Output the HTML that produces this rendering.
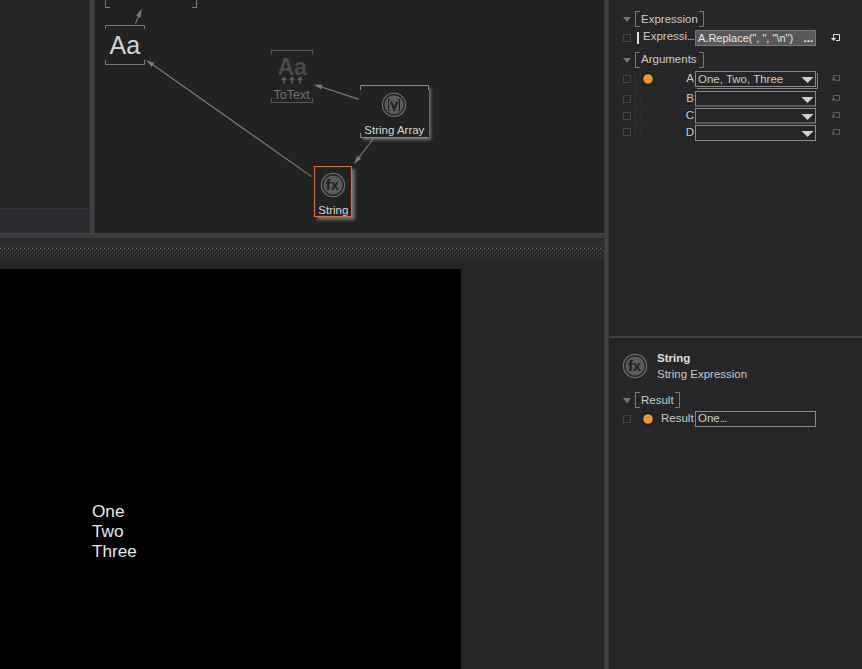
<!DOCTYPE html>
<html><head><meta charset="utf-8">
<style>
html,body{margin:0;padding:0;}
body{width:862px;height:669px;overflow:hidden;position:relative;background:#262628;font-family:"Liberation Sans",sans-serif;}
.a{position:absolute;}
.t{position:absolute;white-space:pre;font-size:11.5px;line-height:13px;color:#cbcbcb;}
svg{position:absolute;left:0;top:0;}
</style></head><body>
<!-- left panel -->
<div class="a" style="left:0;top:0;width:89px;height:208px;background:#232323"></div>
<div class="a" style="left:0;top:208px;width:89px;height:25px;background:#2b2b2f;box-sizing:border-box;border-top:1px solid #36363a"></div>
<div class="a" style="left:89px;top:0;width:6px;height:233px;background:linear-gradient(90deg,#333336,#424245 45%,#3c3c3f 80%,#303032)"></div>
<!-- node editor -->
<div class="a" style="left:95px;top:0;width:509px;height:233px;background:#222222"></div>
<div class="a" style="left:601px;top:0;width:3px;height:233px;background:#202020"></div>
<!-- horizontal bar -->
<div class="a" style="left:0;top:233px;width:604px;height:5px;background:#3b3b3e;box-sizing:border-box;border-top:1px solid #444447"></div>
<!-- dotted band -->
<div class="a" style="left:0;top:238px;width:604px;height:18px;background:#2a2a2c"></div>
<svg style="left:0;top:238px" width="604" height="18">
<defs><pattern id="dp" x="0" y="0" width="4" height="18" patternUnits="userSpaceOnUse">
<rect x="0" y="2" width="1" height="1" fill="#343436"/><rect x="2" y="4" width="1" height="1" fill="#3c3c3e"/><rect x="0" y="6" width="1" height="1" fill="#48484a"/><rect x="2" y="8" width="1" height="1" fill="#5a5a5c"/><rect x="0" y="10" width="1" height="1" fill="#747476"/><rect x="2" y="12" width="1" height="1" fill="#5a5a5c"/><rect x="0" y="14" width="1" height="1" fill="#48484a"/><rect x="2" y="16" width="1" height="1" fill="#38383a"/>
</pattern></defs>
<filter id="sb" x="0" y="0" width="100%" height="100%"><feGaussianBlur stdDeviation="0.45"/></filter><g filter="url(#sb)"><rect x="0" y="0" width="604" height="18" fill="#2a2a2c"/><rect x="0" y="0" width="604" height="18" fill="url(#dp)"/></g>
</svg>
<!-- viewer -->
<div class="a" style="left:0;top:256px;width:604px;height:413px;background:#262628"></div>
<div class="a" style="left:0;top:256px;width:604px;height:3px;background:#2b2b2d"></div>
<div class="a" style="left:0;top:269px;width:461px;height:400px;background:#000"></div>
<div class="a" style="left:92px;top:501px;font-size:17.2px;line-height:20px;color:#e8e8e8;white-space:pre">One
Two
Three</div>
<!-- right divider -->
<div class="a" style="left:604px;top:0;width:5px;height:669px;background:linear-gradient(90deg,#38383b,#454548 50%,#3a3a3d 85%,#303033)"></div>
<!-- right panel -->
<div class="a" style="left:609px;top:0;width:253px;height:669px;background:#262628"></div>
<div class="a" style="left:609px;top:0;width:6px;height:669px;background:#232325"></div>
<div class="a" style="left:609px;top:336px;width:253px;height:2px;background:#404043"></div><div class="a" style="left:609px;top:338px;width:253px;height:1px;background:#222224"></div>

<svg width="862" height="669" viewBox="0 0 862 669">
<defs>
<filter id="bl" x="-20%" y="-20%" width="140%" height="140%"><feGaussianBlur stdDeviation="1.4"/></filter>
</defs>
<g fill="none" stroke="#7a7a7a" stroke-width="1">
  <path d="M105.5 0 V7.5 H110"/><path d="M192 7.5 H196.5 V0"/>
  <path d="M105.5 29 V25.5 H144.5 V29"/><path d="M105.5 60 V64.5 H144.5 V60"/>
</g>
<g fill="none" stroke="#555" stroke-width="1">
  <path d="M271.5 54.5 V50.5 H312.5 V54.5"/><path d="M271.5 98.5 V102.5 H312.5 V98.5"/>
</g>
<!-- lines -->
<g stroke="#7c7c7c" stroke-width="1.15" fill="none">
<line x1="135.3" y1="23.7" x2="138.80" y2="15.67"/>
<line x1="311.6" y1="176.6" x2="152.13" y2="64.32"/>
<line x1="358.9" y1="99.4" x2="320.82" y2="86.76"/>
<line x1="373.1" y1="139" x2="358.54" y2="158.13"/>
</g>
<g fill="#7c7c7c">
<path d="M141.8 8.8 L140.60 17.55 L136.20 15.63 Z"/>
<path d="M146 60 L154.33 62.93 L151.57 66.86 Z"/>
<path d="M313.7 84.4 L322.52 84.80 L321.01 89.36 Z"/>
<path d="M354 164.1 L357.24 155.88 L361.06 158.79 Z"/>
</g>
<text x="109.5" y="54" font-family="Liberation Sans" font-size="25" fill="#d4d4d4">Aa</text>
<text x="277.5" y="75" font-family="Liberation Sans" font-weight="bold" font-size="23" fill="#4a4a4a">Aa</text>
<g fill="#5a5a5a">
  <path d="M284 76.3 L280.8 80.3 H287.2 Z M283.1 80 h1.8 v3.6 h-1.8 Z"/>
  <path d="M292 76.3 L288.8 80.3 H295.2 Z M291.1 80 h1.8 v3.6 h-1.8 Z"/>
  <path d="M300 76.3 L296.8 80.3 H303.2 Z M299.1 80 h1.8 v3.6 h-1.8 Z"/>
</g>
<text x="273.5" y="98.8" font-family="Liberation Sans" font-size="12.5" fill="#727272">ToText</text>

<!-- String Array node -->
<g filter="url(#bl)">
  <rect x="363" y="88" width="68" height="52" fill="#6e6e6e"/>
</g>
<rect x="360" y="85" width="69" height="53" fill="#222"/>
<g fill="none" stroke="#8a8a8a" stroke-width="1">
  <path d="M360.5 90 V85.5 H428.5 V90"/>
  <path d="M360.5 133 V137.5 H428.5"/>
</g>
<circle cx="394" cy="104.8" r="11.6" fill="none" stroke="#6c6c6c" stroke-width="1.3"/>
<circle cx="394" cy="104.8" r="9.6" fill="#5c5c5e"/>
<g fill="none" stroke="#1e1e1e" stroke-width="1">
  <path d="M390 99.5 H388.5 V110.5 H390"/><path d="M398 99.5 H399.5 V110.5 H398"/>
</g>
<path d="M391 101.6 L394.2 109.3 L397.3 101.6" fill="none" stroke="#1e1e1e" stroke-width="2"/>
<text x="364.3" y="133.6" font-family="Liberation Sans" font-size="11.5" fill="#d8d8d8">String Array</text>

<!-- String node -->
<g filter="url(#bl)">
  <rect x="317" y="169" width="38" height="51" fill="#6e6e6e"/>
</g>
<rect x="314" y="166" width="38" height="51" fill="#222"/>
<rect x="314.5" y="166.5" width="37" height="50" fill="none" stroke="#cc7446" stroke-width="1"/>
<rect x="315.5" y="167.5" width="35" height="48" fill="none" stroke="#521808" stroke-width="1"/>
<circle cx="333" cy="185" r="11.6" fill="none" stroke="#6c6c6c" stroke-width="1.3"/>
<circle cx="333" cy="185" r="9.6" fill="#5c5c5e"/>
<text x="332.3" y="190" text-anchor="middle" font-family="Liberation Sans" font-weight="bold" font-size="14.5" fill="#1e1e1e">fx</text>
<text x="318.3" y="213.6" font-family="Liberation Sans" font-size="11.5" fill="#d8d8d8">String</text>
</svg>

<!-- right panel inspector -->
<svg width="862" height="669" viewBox="0 0 862 669">
<g fill="none" stroke="#2b2b2d" stroke-width="1">
  <rect x="635.5" y="71.5" width="58" height="16"/>
  <rect x="635.5" y="91.5" width="58" height="14"/>
  <rect x="635.5" y="108.5" width="58" height="14"/>
  <rect x="635.5" y="125.5" width="58" height="15"/>
  <path d="M640.5 72 V140"/><path d="M634.5 72 V140"/>
</g>
<g fill="#747474">
  <path d="M623 17 H631 L627 22 Z"/>
  <path d="M623 58 H631 L627 63 Z"/>
  <path d="M623 398 H631 L627 403.5 Z"/>
</g>
<g fill="none" stroke="#7a7a7a" stroke-width="1">
  <path d="M640 11.5 H635.5 V26.5 H640"/><path d="M699 11.5 H703.5 V26.5 H699"/>
  <path d="M640 52.5 H635.5 V67.5 H640"/><path d="M699 52.5 H703.5 V67.5 H699"/>
  <path d="M640 392.5 H635.5 V407.5 H640"/><path d="M675 392.5 H679.5 V407.5 H675"/>
</g>
<g fill="none" stroke="#444446" stroke-width="1">
  <rect x="623.5" y="34.5" width="7" height="7"/>
  <rect x="623.5" y="75.5" width="7" height="7"/>
  <rect x="623.5" y="95.5" width="7" height="7"/>
  <rect x="623.5" y="112.5" width="7" height="7"/>
  <rect x="623.5" y="128.5" width="7" height="7"/>
  <rect x="623.5" y="415.5" width="7" height="7"/>
</g>
<rect x="637" y="32" width="2" height="12" fill="#e0e0e0"/>
<!-- expression input -->
<rect x="695.5" y="30.5" width="120" height="15" fill="#585858" stroke="#7a7a7a"/>
<!-- dropdowns -->
<g fill="none" stroke="#8a8a8a" stroke-width="1">
  <rect x="695.5" y="71.5" width="120" height="15"/>
  <path d="M697 88.5 H817.5 V73"/>
  <rect x="695.5" y="91.5" width="120" height="14.5"/>
  <rect x="695.5" y="108.5" width="120" height="14.5"/>
  <rect x="695.5" y="125.5" width="120" height="15"/>
  <rect x="695.5" y="411.5" width="120" height="15"/>
</g>
<g fill="#d0d0d0">
  <path d="M801.5 77 H813.5 L807.5 83 Z"/>
  <path d="M801.5 97 H813.5 L807.5 103 Z"/>
  <path d="M801.5 114 H813.5 L807.5 120 Z"/>
  <path d="M801.5 131 H813.5 L807.5 137 Z"/>
</g>
<g fill="#141a22" opacity="0.8">
  <circle cx="648" cy="79" r="6.5"/>
  <circle cx="648" cy="419" r="6.5"/>
</g>
<g fill="#f0962e">
  <circle cx="648" cy="79" r="4.8"/>
  <circle cx="648" cy="419" r="4.8"/>
</g>
<!-- reset icons -->
<g fill="none" stroke="#e0e0e0" stroke-width="1">
  <path d="M833.5 36.5 V34.5 H839.5 V40.5 H836"/><path d="M833.5 35.5 V40"/>
</g>
<path d="M830.8 38 L833.5 41 L836.2 38 Z" fill="#e0e0e0"/>
<g fill="none" stroke="#5e5e5e" stroke-width="1">
  <path d="M833.5 78 V75.5 H839.5 V80.5 H836"/><path d="M833.5 76 V80"/>
  <path d="M833.5 98 V95.5 H839.5 V100.5 H836"/><path d="M833.5 96 V100"/>
  <path d="M833.5 115 V112.5 H839.5 V117.5 H836"/><path d="M833.5 113 V117"/>
  <path d="M833.5 132 V129.5 H839.5 V134.5 H836"/><path d="M833.5 130 V134"/>
</g>
<g fill="#5e5e5e">
  <path d="M831 78.5 L833.5 81.5 L836 78.5 Z"/>
  <path d="M831 98.5 L833.5 101.5 L836 98.5 Z"/>
  <path d="M831 115.5 L833.5 118.5 L836 115.5 Z"/>
  <path d="M831 132.5 L833.5 135.5 L836 132.5 Z"/>
</g>
<!-- fx icon inspector -->
<circle cx="635" cy="366" r="11.6" fill="none" stroke="#6c6c6c" stroke-width="1.3"/>
<circle cx="635" cy="366" r="9.6" fill="#5c5c5e"/>
<text x="634.5" y="371" text-anchor="middle" font-family="Liberation Sans" font-weight="bold" font-size="14.5" fill="#1e1e1e">fx</text>
</svg>
<div class="t" style="left:641px;top:13px">Expression</div>
<div class="t" style="left:643px;top:30px">Expressi<span style="letter-spacing:-1px">...</span></div>
<div class="t" style="left:698px;top:32px;font-size:11px;color:#e8e8e8">A.Replace(", ", "\n")</div>
<div class="t" style="left:803.5px;top:32px;color:#e8e8e8;font-weight:bold">...</div>
<div class="t" style="left:641px;top:53px">Arguments</div>
<div class="t" style="left:640px;top:72px;width:54px;text-align:right">A</div>
<div class="t" style="left:640px;top:92px;width:54px;text-align:right">B</div>
<div class="t" style="left:640px;top:109px;width:54px;text-align:right">C</div>
<div class="t" style="left:640px;top:126px;width:54px;text-align:right">D</div>
<div class="t" style="left:698px;top:73px">One, Two, Three</div>
<div class="t" style="left:657px;top:352px;font-weight:bold;color:#e0e0e0">String</div>
<div class="t" style="left:657px;top:368px;color:#c8c8c8">String Expression</div>
<div class="t" style="left:641px;top:394px">Result</div>
<div class="t" style="left:661px;top:412px">Result</div>
<div class="t" style="left:698px;top:412px">One<span style="letter-spacing:-1px">...</span></div>
</body></html>
